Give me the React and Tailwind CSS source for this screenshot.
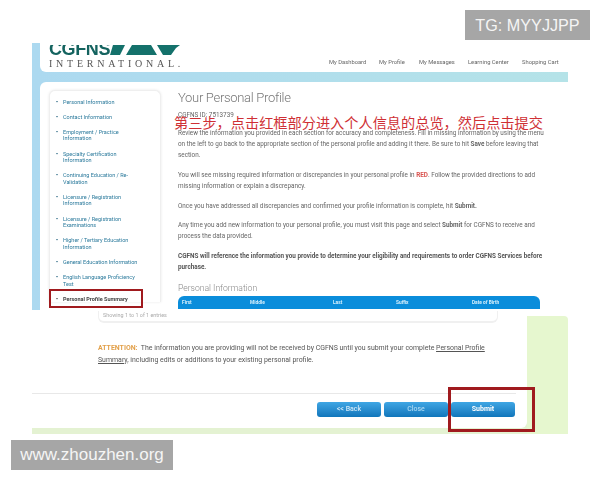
import React from 'react';

const sideItems = [
  ['Personal Information'],
  ['Contact Information'],
  ['Employment / Practice', 'Information'],
  ['Specialty Certification', 'Information'],
  ['Continuing Education / Re-', 'Validation'],
  ['Licensure / Registration', 'Information'],
  ['Licensure / Registration', 'Examinations'],
  ['Higher / Tertiary Education', 'Information'],
  ['General Education Information'],
  ['English Language Proficiency', 'Test'],
];

const navItems = [
  ['My Dashboard', 'w-[50px]'],
  ['My Profile', 'w-[40px]'],
  ['My Messages', 'w-[49px]'],
  ['Learning Center', 'w-[54px]'],
  ['Shopping Cart', 'w-[46px]'],
];

const note = '第三步\uFF0C点击红框部分进入个人信息的总览\uFF0C然后点击提交';

const Logo = () => (
  <div className="pl-[9px] w-[170px]">
    <div className="mt-[2px] h-[10px] overflow-hidden flex items-start">
      <span className="font-['Liberation_Sans',sans-serif] text-[18px] leading-[8px] font-bold text-[#14635f] tracking-[-0.4px] w-[61px] shrink-0 whitespace-nowrap">
        CGFNS
      </span>
      <svg width="70" height="10" viewBox="0 0 70 10" className="shrink-0">
        <path d="M3 0H15L10 10H0Z" fill="#14716b" />
        <path d="M22 0H41L47 10H16Z" fill="#14716b" />
        <path d="M47 0H70L66 3L61 10H53Z" fill="#14716b" />
      </svg>
    </div>
    <div className="font-['Liberation_Serif',serif] text-[10px] leading-[11px] tracking-[3.75px] text-[#555] whitespace-nowrap mt-[3px]">
      INTERNATIONAL.
    </div>
  </div>
);

const Sidebar = () => (
  <div className="mt-[8px] ml-[9px] w-[112px] h-[212px] bg-white rounded-t-md border border-b-0 border-[#efefef] shadow-[0_0_3px_#e8e8e8] pt-[7.5px] pl-[6px] font-['Roboto',sans-serif] text-[5.5px] leading-[6.5px] text-[#2b7a9c] flex flex-col gap-[8.7px] shrink-0">
    {sideItems.map((lines, i) => (
      <div key={i} className="flex">
        <span className="w-[7px] shrink-0 text-[#1f5f7c] font-bold">•</span>
        <div>
          {lines.map((l) => (
            <div key={l} className="whitespace-nowrap">{l}</div>
          ))}
        </div>
      </div>
    ))}
    <div className="flex font-bold text-[#444]">
      <span className="w-[7px] shrink-0">•</span>
      <div className="whitespace-nowrap">Personal Profile Summary</div>
    </div>
  </div>
);

const Profile = () => (
  <div className="ml-[17px] w-[362px] font-['Roboto',sans-serif] text-[6.35px] leading-[11px] text-[#666] whitespace-nowrap">
    <h1 className="text-[13px] leading-[18px] font-light tracking-[-0.3px] text-[#777] mt-[7px]">Your Personal Profile</h1>
    <p className="mt-[3px]">CGFNS ID: 7513739</p>
    <p className="mt-[7px]">
      Review the information you provided in each section for accuracy and completeness. Fill in missing information by using the menu<br />
      on the left to go back to the appropriate section of the personal profile and adding it there. Be sure to hit <b>Save</b> before leaving that<br />
      section.
    </p>
    <p className="mt-[9px]">
      You will see missing required information or discrepancies in your personal profile in <b className="text-[#d9534f]">RED</b>. Follow the provided directions to add<br />
      missing information or explain a discrepancy.
    </p>
    <p className="mt-[9px]">
      Once you have addressed all discrepancies and confirmed your profile information is complete, hit <b>Submit.</b>
    </p>
    <p className="mt-[8px]">
      Any time you add new information to your personal profile, you must visit this page and select <b>Submit</b> for CGFNS to receive and<br />
      process the data provided.
    </p>
    <p className="mt-[9px] font-bold text-[#555]">
      CGFNS will reference the information you provide to determine your eligibility and requirements to order CGFNS Services before<br />
      purchase.
    </p>
    <h2 className="text-[8.6px] leading-[12px] font-light text-[#888] mt-[9px]">Personal Information</h2>
    <div className="mt-[2px] h-[13px] bg-[#0a8ddb] rounded-t-md flex items-center pl-[4px] text-[4.8px] font-bold text-[#d8f0fc]">
      <span className="w-[68px]">First</span>
      <span className="w-[83px]">Middle</span>
      <span className="w-[63px]">Last</span>
      <span className="w-[76px]">Suffix</span>
      <span>Date of Birth</span>
    </div>
  </div>
);

const Btn = ({ children, cls }) => (
  <button className={`w-[64px] h-[15px] rounded-[3px] bg-gradient-to-b from-[#3fa6e4] to-[#0f76bb] font-['Roboto',sans-serif] text-[7px] leading-[15px] text-center ${cls}`}>
    {children}
  </button>
);

const App = () => {
  return (
    <div className="relative w-[600px] h-[480px] bg-white overflow-hidden">
      <div className="pt-[43px] pl-[32px] w-[568px] blur-[0.4px]">
        <div className="h-[267px] pl-[8px] bg-gradient-to-r from-[#acd9f0] to-[#b5e3e8] flex flex-col">
          <div className="h-[29px] bg-white rounded-bl-md flex justify-between items-start">
            <Logo />
            <div className="flex mt-[15px] font-['Roboto',sans-serif] text-[5.8px] leading-[8px] text-[#666]">
              {navItems.map(([t, w]) => (
                <span key={t} className={`${w} whitespace-nowrap`}>{t}</span>
              ))}
            </div>
          </div>
          <div className="h-[10px]" />
          <div className="flex-1 min-h-0 bg-white rounded-tl-md flex overflow-hidden">
            <Sidebar />
            <Profile />
          </div>
        </div>

        <div className="h-[124px] flex">
          <div className="w-[495px] flex flex-col bg-[#e4f2d2]">
            <div className="flex-1 bg-white rounded-br-md pt-[1px]">
              <div className="ml-[66px] mr-[29px] h-[12px] rounded-b-md border-b-2 border-x border-[#f0f0f0] pl-[4px] font-['Roboto',sans-serif] text-[5.4px] leading-[9px] text-[#aaa]">
                Showing 1 to 1 of 1 entries
              </div>
              <p className="ml-[66px] mt-[20px] font-['Roboto',sans-serif] text-[6.95px] leading-[11.5px] text-[#555] whitespace-nowrap">
                <b className="text-[#e2a04a]">ATTENTION:</b>&nbsp; The information you are providing will not be received by CGFNS until you submit your complete <u>Personal Profile</u><br />
                <u>Summary</u>, including edits or additions to your existing personal profile.
              </p>
              <div className="mt-[27px] mr-[11px] border-t border-[#e8e8e8]" />
              <div className="mt-[8px] ml-[285px] flex gap-[3px]">
                <Btn cls="text-[#cfe9f8] font-medium">&lt;&lt; Back</Btn>
                <Btn cls="text-[#a9d8f2] font-medium">Close</Btn>
                <Btn cls="text-white font-bold">Submit</Btn>
              </div>
            </div>
            <div className="h-[6px]" />
          </div>
          <div className="w-[41px] mt-[6px] bg-[#e6f7cf] rounded-tr-sm" />
        </div>
      </div>

      {/* annotation + watermarks sit on top of the screenshot */}
      <div className="absolute left-[174px] top-[112px] font-['Noto_Sans_CJK_SC',sans-serif] text-[14.2px] leading-[20px] text-[#cf3035] whitespace-nowrap">
        {note}
      </div>
      <div className="absolute left-[49px] top-[289px] w-[94px] h-[19px] border-[2.5px] border-[#a01a1e]" />
      <div className="absolute left-[448px] top-[387px] w-[87px] h-[45px] border-[3px] border-[#a01a1e]" />
      <div className="absolute left-[465px] top-[10px] w-[125px] h-[30px] bg-[#a6a6a6] text-[#f5f5f5] font-['Liberation_Sans',sans-serif] text-[16.2px] leading-[30px] text-center">
        TG: MYYJJPP
      </div>
      <div className="absolute left-[11px] top-[440px] w-[162px] h-[30px] bg-[#a6a6a6] text-[#f5f5f5] font-['Liberation_Sans',sans-serif] text-[17px] leading-[30px] text-center">
        www.zhouzhen.org
      </div>
    </div>
  );
};

export default App;
